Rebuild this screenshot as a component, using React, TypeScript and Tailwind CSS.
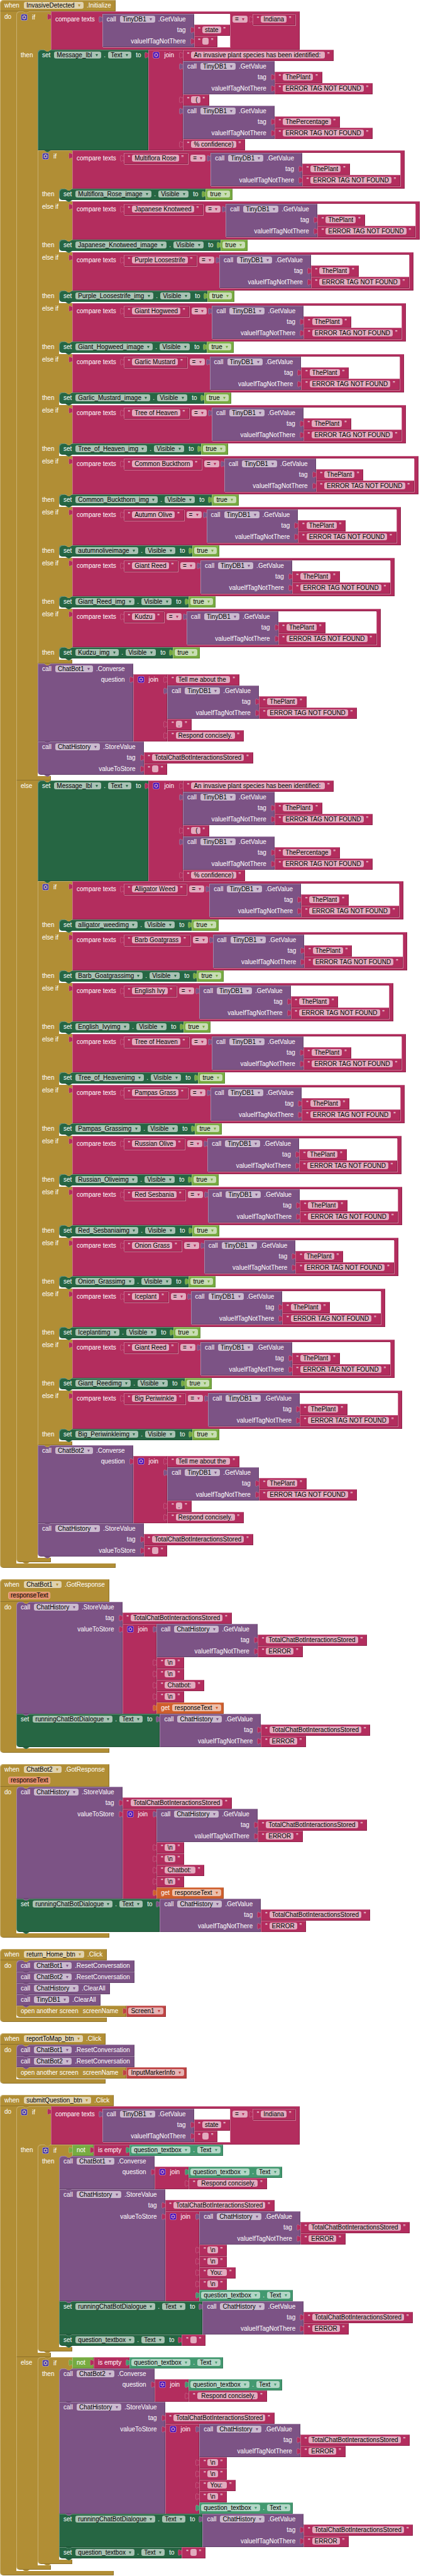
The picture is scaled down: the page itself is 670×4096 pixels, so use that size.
import React from "react";

const EDGE =
  "shadow-[inset_1px_1px_0_rgba(255,255,255,0.3),inset_-1px_-1px_0_rgba(0,0,0,0.2)]";

type Tone = "control" | "text" | "call" | "set" | "get" | "logic" | "variable" | "screen";

const BG: Record<Tone, string> = {
  control: "bg-[#b18e35]",
  text: "bg-[#b32d5e]",
  call: "bg-[#7c5385]",
  set: "bg-[#266643]",
  get: "bg-[#439970]",
  logic: "bg-[#77ab41]",
  variable: "bg-[#d05f2d]",
  screen: "bg-[#bf4343]",
};

const INK: Record<Tone, string> = {
  control: "text-[#b18e35]",
  text: "text-[#b32d5e]",
  call: "text-[#7c5385]",
  set: "text-[#266643]",
  get: "text-[#439970]",
  logic: "text-[#77ab41]",
  variable: "text-[#d05f2d]",
  screen: "text-[#bf4343]",
};

/* ---------- small parts ---------- */

function Dropdown({ value, tone, label }: { value: string; tone: Tone; label: string }) {
  return (
    <span className="relative flex shrink-0">
      <select
        aria-label={label}
        className="h-[11px] appearance-none rounded-[3px] bg-white/60 pr-[14px] pl-1 text-[10px] leading-[11px] text-black outline-none"
      >
        <option>{value}</option>
      </select>
      <svg
        viewBox="0 0 4 4"
        className={`pointer-events-none absolute top-[4px] right-[5px] size-[4px] ${INK[tone]}`}
      >
        <path d="M0 0H4L2 4Z" fill="currentColor" />
      </svg>
    </span>
  );
}

function Gear({ label }: { label: string }) {
  return (
    <button type="button" aria-label={label} className="size-[11px] shrink-0">
      <svg viewBox="-0.5 -0.5 17 17" className="block size-[11px] opacity-60">
        <rect width="16" height="16" rx="4" fill="#00f" stroke="#fff" strokeWidth="1" />
        <path
          fill="#fff"
          d="m4.203,7.296 0,1.368 -0.92,0.677 -0.11,0.41 0.9,1.559 0.41,0.11 1.043,-0.457 1.187,0.683 0.127,1.134 0.3,0.3 1.8,0 0.3,-0.299 0.127,-1.138 1.185,-0.682 1.046,0.458 0.409,-0.11 0.9,-1.559 -0.11,-0.41 -0.92,-0.677 0,-1.366 0.92,-0.677 0.11,-0.41 -0.9,-1.559 -0.409,-0.109 -1.046,0.458 -1.185,-0.682 -0.127,-1.138 -0.3,-0.299 -1.8,0 -0.3,0.3 -0.126,1.135 -1.187,0.682 -1.043,-0.457 -0.41,0.11 -0.899,1.559 0.108,0.409z"
        />
        <circle cx="8" cy="8" r="2.7" fill="#00f" />
      </svg>
    </button>
  );
}

/* Puzzle tab on the left edge of a value block. */
function Tab({ tone }: { tone: Tone }) {
  return (
    <svg
      viewBox="-8.5 0 8.5 20"
      className={`pointer-events-none absolute top-0 -left-[6px] h-[14px] w-[6px] ${INK[tone]}`}
    >
      <path d="M0,5 c0,10 -8,-8 -8,7.5 s8,-2.5 8,7.5 z" fill="currentColor" />
      <path
        d="M0,5 c0,10 -8,-8 -8,7.5 s8,-2.5 8,7.5"
        fill="none"
        stroke="#fff"
        strokeOpacity="0.3"
        strokeWidth="1"
      />
    </svg>
  );
}

/* Connector that hangs from one statement into the next. */
function Notch({ tone, place }: { tone: Tone; place: "top" | "bottom" }) {
  return (
    <svg
      viewBox="0 0 15 4"
      preserveAspectRatio="none"
      className={`pointer-events-none absolute left-[10px] z-10 h-[3px] w-[11px] ${INK[tone]} ${
        place === "top" ? "top-0" : "top-full"
      }`}
    >
      <path d="M0,0 6,4 9,4 15,0Z" fill="currentColor" />
      <path d="M0,0 6,4 9,4 15,0" fill="none" stroke="#fff" strokeOpacity="0.3" strokeWidth="1" />
    </svg>
  );
}

/* ---------- value blocks ---------- */

function Text({ value }: { value: string }) {
  return (
    <div className={`relative flex h-[18px] w-max shrink-0 items-start pt-[3px] pr-[7px] pl-[7px] ${BG.text} ${EDGE}`}>
      <Tab tone="text" />
      <span className="mr-[3px]">“</span>
      <input
        aria-label="text"
        defaultValue={value}
        className="field-sizing-content h-[11px] min-w-[10px] rounded-[3px] bg-white/60 px-1 text-[10px] leading-[11px] text-black outline-none"
      />
      <span className="ml-1">”</span>
    </div>
  );
}

function Pick({ value, tone, label }: { value: string; tone: Tone; label: string }) {
  return (
    <div className={`relative flex h-[18px] w-max shrink-0 items-start pt-[3px] pr-1 pl-[3px] ${BG[tone]} ${EDGE}`}>
      <Tab tone={tone} />
      <Dropdown value={value} tone={tone} label={label} />
    </div>
  );
}

function Getter() {
  return (
    <div className={`relative flex h-[18px] w-max shrink-0 items-start pt-[3px] pr-1 pl-[3px] ${BG.get} ${EDGE}`}>
      <Tab tone="get" />
      <Dropdown value="question_textbox" tone="get" label="component" />
      <span className="mx-1">.</span>
      <Dropdown value="Text" tone="get" label="property" />
    </div>
  );
}

function GetVariable({ name }: { name: string }) {
  return (
    <div className={`relative flex h-[18px] w-max shrink-0 items-start pt-[3px] pr-1 pl-[7px] ${BG.variable} ${EDGE}`}>
      <Tab tone="variable" />
      <span className="mr-1">get</span>
      <Dropdown value={name} tone="variable" label="variable" />
    </div>
  );
}

function Prefix({ word, tone, children }: { word: string; tone: Tone; children: React.ReactNode }) {
  return (
    <div className="relative flex items-start">
      <div className={`h-[18px] pt-[3px] pr-[13px] pl-[7px] ${BG[tone]} ${EDGE}`}>{word}</div>
      <Tab tone={tone} />
      {children}
    </div>
  );
}

function Join({ children }: { children: React.ReactNode }) {
  return (
    <div className="relative flex">
      <div className={`flex items-start gap-[7px] pt-[3px] pr-[14px] pl-[7px] ${BG.text} ${EDGE}`}>
        <Gear label="edit join" />
        <span>join</span>
      </div>
      <Tab tone="text" />
      <div className="flex flex-col items-start">{children}</div>
    </div>
  );
}

type CallProps = { on: string; method: string; args?: string[]; children?: React.ReactNode };

function CallBody({ on, method, args = [], round = "" }: CallProps & { round?: string }) {
  return (
    <div className={`shrink-0 pl-[7px] ${args.length ? "pr-[13px]" : "pr-[7px]"} ${BG.call} ${EDGE} ${round}`}>
      <div className={`flex items-start pt-[3px] ${args.length ? "h-[17px]" : "h-[18px]"}`}>
        <span className="mr-[6px]">call</span>
        <Dropdown value={on} tone="call" label="component" />
        <span className="ml-[5px]">.{method}</span>
      </div>
      {args.map((a) => (
        <div key={a} className="h-[18px] pt-[3px] text-right">
          {a}
        </div>
      ))}
    </div>
  );
}

function CallValue(props: CallProps) {
  return (
    <div className="relative flex">
      <CallBody {...props} />
      <Tab tone="call" />
      <div className="flex flex-col items-start pt-[17px]">{props.children}</div>
    </div>
  );
}

function GetValue({ from, tag, missing }: { from: string; tag: string; missing: string }) {
  return (
    <CallValue on={from} method="GetValue" args={["tag", "valueIfTagNotThere"]}>
      <Text value={tag} />
      <Text value={missing} />
    </CallValue>
  );
}

const Plant = () => <GetValue from="TinyDB1" tag="ThePlant" missing="ERROR TAG NOT FOUND" />;
const History = () => (
  <GetValue from="ChatHistory" tag="TotalChatBotInteractionsStored" missing="ERROR" />
);

function Slot({ children }: { children: React.ReactNode }) {
  return (
    <div className="bg-white shadow-[1px_1px_0_#cd7695,0_-1px_0_#8f244b]">{children}</div>
  );
}

function Compare({ left, right }: { left: React.ReactNode; right: React.ReactNode }) {
  return (
    <div className={`relative flex w-max items-start py-1 pr-[7px] pl-[7px] ${BG.text} ${EDGE}`}>
      <Tab tone="text" />
      <span className="mt-[3px] mr-3">compare texts</span>
      <Slot>{left}</Slot>
      <div className="mt-[3px] mr-2 ml-1">
        <Dropdown value="=" tone="text" label="comparison" />
      </div>
      <Slot>{right}</Slot>
    </div>
  );
}

/* ---------- statement blocks ---------- */

type Ends = { first?: boolean; last?: boolean };
const corners = ({ first, last }: Ends) =>
  `${first ? "rounded-tl-[5px]" : ""} ${last ? "rounded-bl-[5px]" : ""}`;

function Call({ first, last, ...call }: CallProps & Ends) {
  return (
    <div className="relative flex">
      <CallBody {...call} round={corners({ first, last })} />
      <div className="flex flex-col items-start pt-[17px]">{call.children}</div>
      <Notch tone="call" place="bottom" />
    </div>
  );
}

function SetTo({
  on,
  property,
  children,
  first,
  last,
}: { on: string; property: string; children: React.ReactNode } & Ends) {
  return (
    <div className="relative flex">
      <div
        className={`flex shrink-0 items-start pt-[3px] pr-3 pl-[7px] ${BG.set} ${EDGE} ${corners({ first, last })}`}
      >
        <span className="mr-[6px]">set</span>
        <Dropdown value={on} tone="set" label="component" />
        <span className="mx-1">.</span>
        <Dropdown value={property} tone="set" label="property" />
        <span className="ml-[7px]">to</span>
      </div>
      {children}
      <Notch tone="set" place="bottom" />
    </div>
  );
}

function OpenScreen({ name }: { name: string }) {
  return (
    <div className="relative flex items-start">
      <div
        className={`flex h-[18px] gap-[7px] rounded-bl-[5px] pt-[3px] pr-[13px] pl-[7px] ${BG.control} ${EDGE}`}
      >
        <span>open another screen</span>
        <span>screenName</span>
      </div>
      <Pick value={name} tone="screen" label="screen" />
    </div>
  );
}

function Stack({ children, closed = false }: { children: React.ReactNode; closed?: boolean }) {
  return (
    <div className={`relative flex flex-col items-start ${closed ? "pb-px" : "pb-[2px]"}`}>
      <span className="absolute top-0 left-0 size-[5px] bg-[#b18e35]" />
      {children}
      <Notch tone="control" place="top" />
    </div>
  );
}

const RAIL = "shrink-0 bg-[#b18e35] pl-[7px] pt-[3px] shadow-[inset_1px_0_0_rgba(255,255,255,0.3)]";

function Section({ word, children }: { word: string; children: React.ReactNode }) {
  return (
    <div className="flex">
      <div className={`w-[34px] ${RAIL}`}>{word}</div>
      <Stack>{children}</Stack>
    </div>
  );
}

function Test({ word, gear = false, round = false, children }: {
  word: string;
  gear?: boolean;
  round?: boolean;
  children: React.ReactNode;
}) {
  return (
    <div className="flex">
      <div
        className={`flex w-[55px] items-start gap-[7px] ${RAIL} ${gear ? "border-t border-[#c8ae6c] pt-[2px]" : ""} ${
          round ? "rounded-tl-[5px]" : ""
        }`}
      >
        {gear && <Gear label="edit if" />}
        <span>{word}</span>
      </div>
      {children}
    </div>
  );
}

function Foot({ wide = false, round = false }: { wide?: boolean; round?: boolean }) {
  return (
    <div
      className={`w-[55px] bg-[#b18e35] shadow-[inset_1px_0_0_rgba(255,255,255,0.3),inset_-1px_-1px_0_rgba(0,0,0,0.2)] ${
        wide ? "h-[7px]" : "h-[6px]"
      } ${round ? "rounded-bl-[5px]" : ""}`}
    />
  );
}

function IfElse({ test, then, otherwise }: {
  test: React.ReactNode;
  then: React.ReactNode;
  otherwise: React.ReactNode;
}) {
  return (
    <div className="relative">
      <Test word="if" gear round>
        {test}
      </Test>
      <Section word="then">{then}</Section>
      <Foot wide />
      <Section word="else">{otherwise}</Section>
      <Foot wide round />
      <Notch tone="control" place="bottom" />
    </div>
  );
}

function PlantChain({ plants }: { plants: [string, string][] }) {
  return (
    <div className="relative">
      {plants.map(([plant, image], i) => (
        <React.Fragment key={plant}>
          <Test word={i === 0 ? "if" : "else if"} gear={i === 0}>
            <Compare left={<Text value={plant} />} right={<Plant />} />
          </Test>
          <Section word="then">
            <SetTo on={image} property="Visible" first last>
              <Pick value="true" tone="logic" label="value" />
            </SetTo>
          </Section>
        </React.Fragment>
      ))}
      <Foot />
      <Notch tone="control" place="bottom" />
    </div>
  );
}

function When({ on, event, param, children, closed = false }: {
  on: string;
  event: string;
  param?: string;
  children: React.ReactNode;
  closed?: boolean;
}) {
  return (
    <section className="grid w-max grid-cols-[max-content_max-content]">
      <div className={`rounded-tl-[5px] pr-[7px] pl-[7px] ${BG.control} ${EDGE}`}>
        <div className="flex h-[18px] items-start pt-[3px]">
          <span className="mr-[7px]">when</span>
          <Dropdown value={on} tone="control" label="component" />
          <span className="ml-[5px]">.{event}</span>
        </div>
        {param && (
          <div className="flex h-[18px] items-start pt-[2px] pl-[6px]">
            <span className="h-3 rounded-[3px] border border-[#ecb293] bg-[#e08b67] px-[3px] leading-[10px] text-black">
              {param}
            </span>
          </div>
        )}
      </div>
      <div className="col-span-2 col-start-1 flex">
        <div className={`w-[26px] ${RAIL}`}>do</div>
        <Stack closed={closed}>{children}</Stack>
      </div>
      <div
        className={`col-start-1 h-[7px] rounded-bl-[5px] ${BG.control} shadow-[inset_1px_0_0_rgba(255,255,255,0.3),inset_-1px_-1px_0_rgba(0,0,0,0.2)]`}
      />
    </section>
  );
}

/* ---------- repeated groups ---------- */

function Announce() {
  return (
    <SetTo on="Message_lbl" property="Text" first>
      <Join>
        <Text value="An invasive plant species has been identified: " />
        <Plant />
        <Text value=" (" />
        <GetValue from="TinyDB1" tag="ThePercentage" missing="ERROR TAG NOT FOUND" />
        <Text value="% confidence)" />
      </Join>
    </SetTo>
  );
}

function AskAboutPlant({ bot }: { bot: string }) {
  return (
    <>
      <Call on={bot} method="Converse" args={["question"]}>
        <Join>
          <Text value="Tell me about the " />
          <Plant />
          <Text value="." />
          <Text value="Respond concisely." />
        </Join>
      </Call>
      <Call on="ChatHistory" method="StoreValue" args={["tag", "valueToStore"]} last>
        <Text value="TotalChatBotInteractionsStored" />
        <Text value="" />
      </Call>
    </>
  );
}

function StoreLine({ who, first, children }: { who: string; first?: boolean; children: React.ReactNode }) {
  return (
    <Call on="ChatHistory" method="StoreValue" args={["tag", "valueToStore"]} first={first}>
      <Text value="TotalChatBotInteractionsStored" />
      <Join>
        <History />
        <Text value="\n" />
        <Text value="\n" />
        <Text value={who} />
        <Text value="\n" />
        {children}
      </Join>
    </Call>
  );
}

function GotResponse({ bot }: { bot: string }) {
  return (
    <When on={bot} event="GotResponse" param="responseText">
      <StoreLine who="Chatbot: " first>
        <GetVariable name="responseText" />
      </StoreLine>
      <SetTo on="runningChatBotDialogue" property="Text" last>
        <History />
      </SetTo>
    </When>
  );
}

function AskQuestion({ bot }: { bot: string }) {
  return (
    <div className="relative">
      <Test word="if" gear round>
        <Prefix word="not" tone="logic">
          <Prefix word="is empty" tone="text">
            <Getter />
          </Prefix>
        </Prefix>
      </Test>
      <Section word="then">
        <Call on={bot} method="Converse" args={["question"]} first>
          <Join>
            <Getter />
            <Text value=" Respond concisely." />
          </Join>
        </Call>
        <StoreLine who="You: ">
          <Getter />
        </StoreLine>
        <SetTo on="runningChatBotDialogue" property="Text">
          <History />
        </SetTo>
        <SetTo on="question_textbox" property="Text" last>
          <Text value="" />
        </SetTo>
      </Section>
      <Foot wide round />
      <Notch tone="control" place="bottom" />
    </div>
  );
}

const StateIsIndiana = () => (
  <Compare left={<GetValue from="TinyDB1" tag="state" missing="" />} right={<Text value="Indiana" />} />
);

const INDIANA: [string, string][] = [
  ["Multiflora Rose", "Multiflora_Rose_image"],
  ["Japanese Knotweed", "Japanese_Knotweed_image"],
  ["Purple Loosestrife", "Purple_Loosestrife_img"],
  ["Giant Hogweed", "Giant_Hogweed_image"],
  ["Garlic Mustard", "Garlic_Mustard_image"],
  ["Tree of Heaven", "Tree_of_Heaven_img"],
  ["Common Buckthorn", "Common_Buckthorn_img"],
  ["Autumn Olive", "autumnoliveimage"],
  ["Giant Reed", "Giant_Reed_img"],
  ["Kudzu", "Kudzu_img"],
];

const ELSEWHERE: [string, string][] = [
  ["Alligator Weed", "alligator_weedimg"],
  ["Barb Goatgrass", "Barb_Goatgrassimg"],
  ["English Ivy", "English_Ivyimg"],
  ["Tree of Heaven", "Tree_of_Heavenimg"],
  ["Pampas Grass", "Pampas_Grassimg"],
  ["Russian Olive", "Russian_Oliveimg"],
  ["Red Sesbania", "Red_Sesbaniaimg"],
  ["Onion Grass", "Onion_Grassimg"],
  ["Iceplant", "Iceplantimg"],
  ["Giant Reed", "Giant_Reedimg"],
  ["Big Periwinkle", "Big_Periwinkleimg"],
];

export default function App() {
  return (
    <main className="flex flex-col gap-[18px] overflow-hidden bg-white font-['Liberation_Sans',Arial,sans-serif] text-[10px] leading-[11px] whitespace-nowrap text-white">
      <When on="InvasiveDetected" event="Initialize">
        <IfElse
          test={<StateIsIndiana />}
          then={
            <>
              <Announce />
              <PlantChain plants={INDIANA} />
              <AskAboutPlant bot="ChatBot1" />
            </>
          }
          otherwise={
            <>
              <Announce />
              <PlantChain plants={ELSEWHERE} />
              <AskAboutPlant bot="ChatBot2" />
            </>
          }
        />
      </When>

      <GotResponse bot="ChatBot1" />
      <GotResponse bot="ChatBot2" />

      <When on="return_Home_btn" event="Click" closed>
        <Call on="ChatBot1" method="ResetConversation" first />
        <Call on="ChatBot2" method="ResetConversation" />
        <Call on="ChatHistory" method="ClearAll" />
        <Call on="TinyDB1" method="ClearAll" />
        <OpenScreen name="Screen1" />
      </When>

      <When on="reportToMap_btn" event="Click" closed>
        <Call on="ChatBot1" method="ResetConversation" first />
        <Call on="ChatBot2" method="ResetConversation" />
        <OpenScreen name="InputMarkerInfo" />
      </When>

      <When on="submitQuestion_btn" event="Click">
        <IfElse
          test={<StateIsIndiana />}
          then={<AskQuestion bot="ChatBot1" />}
          otherwise={<AskQuestion bot="ChatBot2" />}
        />
      </When>
    </main>
  );
}
